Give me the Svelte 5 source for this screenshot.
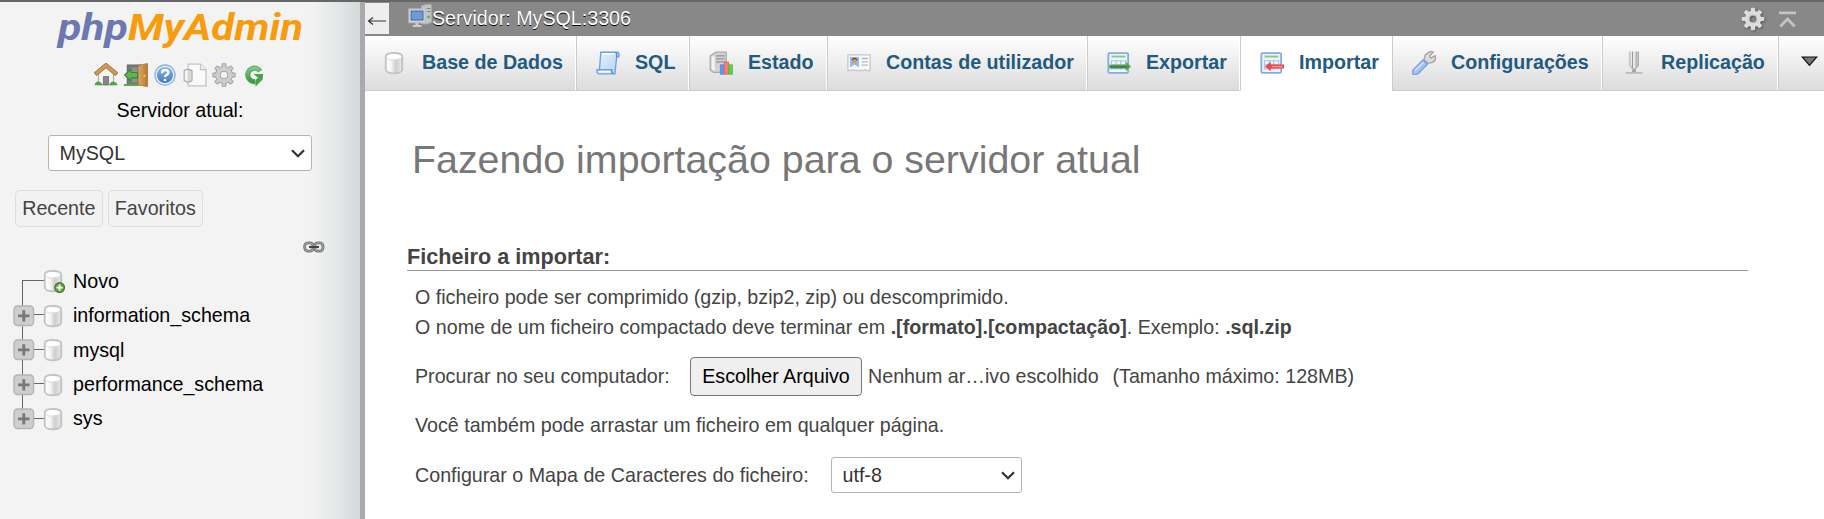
<script>
  const tabs = [
    { icon: 'db', label: 'Base de Dados' },
    { icon: 'sql', label: 'SQL' },
    { icon: 'status', label: 'Estado' },
    { icon: 'users', label: 'Contas de utilizador' },
    { icon: 'export', label: 'Exportar' },
    { icon: 'import', label: 'Importar', active: true },
    { icon: 'wrench', label: 'Configurações' },
    { icon: 'replication', label: 'Replicação' }
  ];
  const databases = ['information_schema', 'mysql', 'performance_schema', 'sys'];
  const shortcuts = ['home', 'exit', 'help', 'doc', 'gear', 'reload'];
  const teeth = [0, 45, 90, 135, 180, 225, 270, 315];
</script>

<svg class="defs" width="0" height="0" aria-hidden="true">
  <defs>
    <linearGradient id="cyl"><stop offset="0" stop-color="#fff" /><stop offset=".35" stop-color="#f4f4f4" /><stop offset=".6" stop-color="#cfcfcf" /><stop offset="1" stop-color="#e8e8e8" /></linearGradient>
    <linearGradient id="wood"><stop offset="0" stop-color="#dfa965" /><stop offset="1" stop-color="#b87731" /></linearGradient>
    <linearGradient id="blue" x2="0" y2="1"><stop offset="0" stop-color="#8db5e3" /><stop offset="1" stop-color="#4279bd" /></linearGradient>
    <linearGradient id="paper" x2="1" y2="1"><stop offset="0" stop-color="#e6f1fd" /><stop offset="1" stop-color="#b4d3f5" /></linearGradient>
    <linearGradient id="green" x2="0" y2="1"><stop offset="0" stop-color="#80c785" /><stop offset="1" stop-color="#3d9845" /></linearGradient>
  </defs>
</svg>

{#snippet cylinder()}
  <path d="M2.5 3.6C2.5.4 13.5.4 13.5 3.6V12.2C13.5 15.8 2.5 15.8 2.5 12.2Z" fill="url(#cyl)" stroke="#c2c2c2" stroke-width="1.2" />
  <ellipse cx="8" cy="3.8" rx="4.7" ry="1.8" fill="#fff" />
  <path d="M3.3 5C5 6.7 11 6.7 12.7 5" fill="none" stroke="#ddd" stroke-width=".6" />
{/snippet}

{#snippet sheet()}
  <rect x=".9" y="1.4" width="13.2" height="13.2" rx=".8" fill="#edf5fd" stroke="#87abe0" stroke-width="1.2" />
  <path d="M3 3.7H12.3" stroke="#8acb7c" stroke-width="1.3" />
  <path d="M3 6.5H12.5M3 9H12.5M3 11.8H12.5M3 6V12.5M6.1 6V12.5M9.2 6V12.5M12.4 6V12.5" stroke="#aac5e8" stroke-width=".8" />
{/snippet}

{#snippet icon(name)}
  <svg class="icon" viewBox="0 0 16 16" aria-hidden="true">
    {#if name === 'db' || name === 'new'}
      {@render cylinder()}
      {#if name === 'new'}
        <circle cx="12.4" cy="12.4" r="3.3" fill="#5d9f3c" stroke="#3f7d26" stroke-width=".7" />
        <path d="M12.4 10.3V14.5M10.3 12.4H14.5" stroke="#fff" stroke-width="1.3" />
      {/if}
    {:else if name === 'sql'}
      <path d="M3.2 .8H14.4Q15.8 1.6 15.2 3.8H13.8L12.6 15.2H1.8Q.2 14.8.7 12.5H2.3Z" fill="url(#paper)" stroke="#69a1df" stroke-width=".9" />
      <path d="M13 1Q14.4 1.8 13.7 3.8M2.3 12.5H10.6Q10 14.6 11.7 15.2" fill="none" stroke="#4c8bd0" stroke-width=".8" />
      <path d="M4 1.9H12.4M2 13.8H9.8" stroke="#fff" stroke-width="1" />
    {:else if name === 'status'}
      <path d="M.8 3.3L4.5.8H11.5V12L9 14.3H3L.8 12.7Z" fill="#d2d2d2" stroke="#aaa" stroke-width=".8" />
      <path d="M4.7 3.2H10.6M4.7 5.2H10.6M4.7 7.2H10.6" stroke="#959595" stroke-width=".9" />
      <path d="M1.8 4V12.4L3.8 13.2V3Z" fill="#f4f4f4" />
      <path d="M7.6 9.2H10V15.5H7.6Z" fill="#6798ef" stroke="#4a7de0" stroke-width=".5" />
      <path d="M10.2 7.3H13V15.5H10.2Z" fill="#f3826c" stroke="#e8604c" stroke-width=".5" />
      <path d="M13.2 9.2H15.8V15.5H13.2Z" fill="#63cf55" stroke="#45b83d" stroke-width=".5" />
    {:else if name === 'users'}
      <path d="M.6 2.6H15.4V13H12.7Q12 11.9 11 13H4.8Q4 11.9 3 13H.6Z" fill="#fafafa" stroke="#c8c8c8" stroke-width=".9" />
      <rect x="2" y="4" width="6" height="6.6" fill="#8dbbf2" />
      <circle cx="5" cy="6.5" r="1.7" fill="#d79863" />
      <path d="M3.4 6Q5 3.9 6.7 6" stroke="#67401c" stroke-width=".8" fill="none" />
      <path d="M3.2 10.6Q5 7.6 6.9 10.6Z" fill="#fff" />
      <path d="M9.7 5H14" stroke="#91bdee" stroke-width="1" />
      <path d="M9.7 7.2H14M9.7 9.4H14" stroke="#bbb" stroke-width=".9" />
    {:else if name === 'export'}
      {@render sheet()}
      <path d="M1.5 9.1H12.6V7.4L16 10.4L12.6 13.3V11.6H1.5Z" fill="#5aa14c" />
      <path d="M2 10.6H13.5" stroke="#2d7a2a" stroke-width=".8" />
    {:else if name === 'import'}
      {@render sheet()}
      <path d="M16 9H7.2V7.1L3.3 10.4L7.2 13.5V11.7H16Z" fill="#f04848" />
      <path d="M8 10.4H15" stroke="#ff9d96" stroke-width=".8" />
    {:else if name === 'wrench'}
      <path d="M8 5.6L8.9 2.5L12.3.3L14.2.8L11.7 3.4L12.6 4.8L15.5 3.2Q16.6 5.7 13.7 7.6L10.6 8.2Z" fill="#dcdcdc" stroke="#a2a2a2" stroke-width=".9" />
      <path d="M7.4 6L10.3 8.9L4.2 15Q1.7 16.4.7 15.3Q-.4 13.8 1 12.4Z" fill="#a4c3f2" stroke="#7a9fde" stroke-width=".9" />
      <path d="M2 13L7.7 7.5" stroke="#dae8fd" stroke-width=".9" />
    {:else if name === 'replication'}
      <path d="M5.2 .4V9.8" stroke="#c6c6c6" stroke-width="1.3" />
      <path d="M7 .4V11.5M10.8 .4V10" stroke="#999" stroke-width=".8" />
      <path d="M8.1 .4V12" stroke="#e8e8e8" stroke-width="1.3" />
      <path d="M9.5 .4V11.4" stroke="#b4b4b4" stroke-width="1.2" />
      <path d="M5.4 9.8L7 11.6L9 11.8L10.8 10" fill="none" stroke="#b0b0b0" stroke-width=".7" />
      <circle cx="8" cy="13.3" r="1.4" fill="#a4a4a4" />
      <path d="M2.4 14.6H13.8" stroke="#b8b8b8" stroke-width="1.1" />
    {:else if name === 'home'}
      <path d="M3 7L8 2.5L13 7V14.5H3Z" fill="#f4f4f2" stroke="#aaa" stroke-width=".7" />
      <path d="M6.3 9H9.7V14.6H6.3Z" fill="#888" stroke="#666" stroke-width=".5" />
      <path d="M.8 7.6L8 1.6L15.2 7.6" fill="none" stroke="#9f6a34" stroke-width="2.9" />
      <path d="M1.2 7.2L8 1.6L14.8 7.2" fill="none" stroke="#d39a57" stroke-width="2" />
      <path d="M.3 14.8Q1 12 3 12.3T5.8 14.8ZM10.2 14.8Q11 12 13 12.3T15.8 14.8Z" fill="#4fa641" />
    {:else if name === 'exit'}
      <path d="M2.2 1.3H11V14.5H2.2Z" fill="#777" stroke="#666" stroke-width=".7" />
      <path d="M4 3H10V13H4Z" fill="#8f8f8f" />
      <path d="M0 14.7H10" stroke="#5daa47" stroke-width="1.3" />
      <path d="M9.5 1.6L15.7.3V15.8L9.5 14.6Z" fill="url(#wood)" stroke="#a5713a" stroke-width=".5" />
      <circle cx="13.6" cy="8.5" r=".7" fill="#ffdc55" />
      <path d="M9 6.3H4.8V4L.4 8L4.8 12V9.9H9Z" fill="#65b34d" stroke="#368a35" stroke-width=".7" />
    {:else if name === 'help'}
      <circle cx="8" cy="8" r="6.7" fill="#eef5fd" stroke="#8eb1dc" stroke-width=".9" />
      <circle cx="8" cy="8" r="5.4" fill="url(#blue)" />
      <path d="M6 6.8Q6 4.7 8.1 4.7T10.2 6.4Q10.2 7.4 8.9 8Q8 8.5 8 9.3M8 10.5V12" fill="none" stroke="#fff" stroke-width="1.6" />
    {:else if name === 'doc'}
      <path d="M3.4.7H11.6L15.3 4.4V15.3H3.4Z" fill="#fafafa" stroke="#c3c3c3" stroke-width=".8" />
      <path d="M11.6.7V4.4H15.3" fill="#eee" stroke="#c3c3c3" stroke-width=".7" />
      <path d="M.8 5.2Q3.3 3.4 6 5.2V11.7Q3.3 13.7.8 11.7Z" fill="url(#cyl)" stroke="#acacac" stroke-width=".8" />
    {:else if name === 'gear'}
      <g fill="#a2a2a2">
        {#each teeth as angle}
          <rect x="6.4" y=".2" width="3.2" height="4" rx=".6" transform="rotate({angle} 8 8)" />
        {/each}
      </g>
      <circle cx="8" cy="8" r="4.1" fill="none" stroke="#9a9a9a" stroke-width="3.8" />
      <circle cx="8" cy="8" r="4.1" fill="none" stroke="#cdcdcd" stroke-width="2.8" />
      <g fill="#cdcdcd">
        {#each teeth as angle}
          <rect x="7.1" y=".8" width="1.8" height="3" transform="rotate({angle} 8 8)" />
        {/each}
      </g>
    {:else if name === 'gearlight'}
      <g fill="#dcdcdc">
        {#each teeth as angle}
          <rect x="6.6" y=".5" width="2.8" height="4" rx=".7" transform="rotate({angle} 8 8)" />
        {/each}
      </g>
      <circle cx="8" cy="8" r="4" fill="none" stroke="#dcdcdc" stroke-width="3" />
      <circle cx="8" cy="8" r="2.5" fill="none" stroke="#b5b5b5" stroke-width=".7" />
    {:else if name === 'reload'}
      <path d="M12.1 5.4A4.5 4.5 0 1 0 8.8 12.4" fill="none" stroke="#48a052" stroke-width="3.4" />
      <path d="M12 5.3A4.5 4.5 0 1 0 8.8 12.3" fill="none" stroke="url(#green)" stroke-width="2.4" />
      <path d="M7.6 7.3H14V8.8Q14 11.6 12 12.6L9 15.8V11.2L10.8 9.9Z" fill="#47a24e" />
    {:else if name === 'server'}
      <path d="M9 1.3L12 .4H15.6V12.2L12.6 13.3H9Z" fill="#c4c4c4" stroke="#aaa" stroke-width=".6" />
      <path d="M12.5 3H15M12.5 5H15" stroke="#888" stroke-width=".8" />
      <circle cx="13.7" cy="8.6" r=".9" fill="#45b847" />
      <rect x=".6" y="3.3" width="10.8" height="9.2" fill="#d4d4d4" stroke="#bdbdbd" stroke-width=".7" />
      <rect x="2.1" y="4.7" width="7.9" height="6" fill="#6f9ad6" stroke="#3763a4" stroke-width=".6" />
      <path d="M5 12.7H7V14H9V15.4H3.2V14H5Z" fill="#ccc" />
    {/if}
  </svg>
{/snippet}

{#snippet chevron()}
  <svg class="chevron" viewBox="0 0 14 9" aria-hidden="true"><path d="M1 1.2L7 7.2L13 1.2" fill="none" stroke="#333" stroke-width="2.3" /></svg>
{/snippet}

<div class="app">
  <aside>
    <svg class="logo" viewBox="0 0 250 50" role="img" aria-label="phpMyAdmin">
      <text x="2" y="33" textLength="70" lengthAdjust="spacingAndGlyphs" fill="#6c78af">php</text>
      <text x="72" y="33" textLength="175" lengthAdjust="spacingAndGlyphs" fill="#f89c0e">MyAdmin</text>
    </svg>
    <nav class="shortcuts">
      {#each shortcuts as name}{@render icon(name)}{/each}
    </nav>
    <div class="current">Servidor atual:</div>
    <div class="select server-select">
      <select aria-label="Servidor atual"><option>MySQL</option></select>
      {@render chevron()}
    </div>
    <div class="lists"><span>Recente</span><span>Favoritos</span></div>
    <div class="link">
      <svg width="22" height="12" viewBox="0 0 22 12" aria-hidden="true">
        <g fill="none"><rect x="1.7" y="1.8" width="8.6" height="8.4" rx="3.6" stroke="#707070" stroke-width="2.8" /><rect x="11.4" y="1.8" width="8.6" height="8.4" rx="3.6" stroke="#707070" stroke-width="2.8" /><rect x="1.7" y="1.8" width="8.6" height="8.4" rx="3.6" stroke="#b5b5b5" stroke-width=".9" /><rect x="11.4" y="1.8" width="8.6" height="8.4" rx="3.6" stroke="#b5b5b5" stroke-width=".9" /></g>
        <path d="M6 6H16" stroke="#444" stroke-width="2.2" />
      </svg>
    </div>
    <ul class="tree">
      <li class="first">
        <span class="node"></span>{@render icon('new')}<span>Novo</span>
      </li>
      {#each databases as name, i}
        <li class:last={i === databases.length - 1}>
          <span class="node">
            <svg class="plus" viewBox="0 0 22 22" aria-hidden="true"><rect x="1" y="1" width="19.5" height="19.5" rx="3.5" fill="#cecece" stroke="#b5b5b5" stroke-width="1.4" /><path d="M10.8 5.2V16.6M5.1 10.9H16.5" stroke="#777" stroke-width="2.8" /></svg>
          </span>{@render icon('db')}<span>{name}</span>
        </li>
      {/each}
    </ul>
  </aside>
  <div class="splitter"></div>
  <main>
    <header>
      <button class="back" aria-label="Voltar">
        <svg width="20" height="10" viewBox="0 0 20 10" aria-hidden="true"><path d="M19 5H2M6 1.5L1.5 5L6 8.5" fill="none" stroke="#333" stroke-width="1.2" /></svg>
      </button>
      <div class="crumb">{@render icon('server')}<span>Servidor: MySQL:3306</span></div>
      <div class="tools">
        {@render icon('gearlight')}
        <svg width="18" height="17" viewBox="0 0 18 17" aria-hidden="true"><path d="M0 1.9H17M1.3 15.5L8.5 8L15.7 15.5" fill="none" stroke="#c4c4c4" stroke-width="2.6" /></svg>
      </div>
    </header>
    <nav class="tabs">
      {#each tabs as tab}
        <a class:active={tab.active}>{@render icon(tab.icon)}<span>{tab.label}</span></a>
      {/each}
      <a class="more"><svg width="17" height="11" viewBox="0 0 17 11" aria-hidden="true"><path d="M1.3 1H15.7L8.5 9.3Z" fill="#777" stroke="#111" stroke-width="1.2" /></svg></a>
    </nav>
    <section>
      <h2>Fazendo importação para o servidor atual</h2>
      <h3>Ficheiro a importar:</h3>
      <form>
        <p>O ficheiro pode ser comprimido (gzip, bzip2, zip) ou descomprimido.<br />O nome de um ficheiro compactado deve terminar em <b>.[formato].[compactação]</b>. Exemplo: <b>.sql.zip</b></p>
        <div class="browse">
          <span>Procurar no seu computador:</span>
          <button type="button">Escolher Arquivo</button>
          <span class="chosen">Nenhum ar…ivo escolhido</span>
          <span>(Tamanho máximo: 128MB)</span>
        </div>
        <p class="drag">Você também pode arrastar um ficheiro em qualquer página.</p>
        <div class="charset">
          <span>Configurar o Mapa de Caracteres do ficheiro:</span>
          <div class="select">
            <select aria-label="Mapa de Caracteres"><option>utf-8</option></select>
            {@render chevron()}
          </div>
        </div>
      </form>
    </section>
  </main>
</div>

<style>
  :global(body) { margin: 0; overflow: hidden; background: #fff; }
  .defs { position: absolute; }
  .app {
    display: grid;
    grid-template-columns: 360px 5px 1fr;
    box-sizing: border-box;
    width: 100vw;
    height: 519px;
    border-top: 2px solid #666;
    overflow: hidden;
    font: 19.68px "Liberation Sans", Arial, sans-serif;
    color: #444;
    white-space: nowrap;
  }
  .icon { display: block; flex: none; width: 24px; height: 24px; }
  aside {
    min-width: 0;
    background: linear-gradient(to right, #f3f3f3 308px, #eaecec 328px, #dfe3e4 344px, #d3d8da 360px);
    color: #000;
  }
  .splitter { background: #aaa; }
  .logo { display: block; width: 250px; height: 50px; margin: 5px 0 0 56px; overflow: visible; }
  .logo text { font: italic 700 37.5px Roboto, sans-serif; }
  .shortcuts { display: flex; gap: 5.5px; margin: 6px 0 0 94px; }
  .current { margin-top: 8px; height: 30px; line-height: 30px; text-align: center; }
  .select { position: relative; box-sizing: border-box; height: 36px; }
  select {
    appearance: none;
    box-sizing: border-box;
    display: block;
    width: 100%;
    height: 100%;
    margin: 0;
    padding: 0 0 0 10.5px;
    border: 1px solid #b5b5b5;
    border-radius: 3px;
    background: #fff;
    color: #333;
    font: inherit;
  }
  .chevron { position: absolute; right: 7px; top: 14px; width: 14px; height: 9px; }
  .server-select { width: 264px; margin: 10px 0 0 48px; }
  .lists { display: flex; gap: 5px; margin: 19px 0 0 15px; }
  .lists span {
    box-sizing: border-box;
    height: 37px;
    padding: 0 6.2px;
    border: 1px solid #ddd;
    border-radius: 5px;
    background: #f2f2f2;
    color: #444;
    line-height: 34px;
  }
  .link { height: 12px; margin: 14px 0 0 303px; }
  .link svg { display: block; }
  .tree { list-style: none; margin: 11px 0 0 13px; padding: 0; }
  .tree li { display: flex; align-items: center; height: 34.45px; }
  .tree li > span:last-child { margin-left: 8px; }
  .node {
    display: flex;
    align-items: center;
    width: 31px;
    height: 100%;
    margin-right: -3px;
    background:
      linear-gradient(#666, #666) 9px 0 / 1px 100% no-repeat,
      linear-gradient(#666, #666) 9px 16px / 22px 1px no-repeat;
  }
  .first .node {
    background:
      linear-gradient(#666, #666) 9px 17px / 1px 100% no-repeat,
      linear-gradient(#666, #666) 9px 16px / 22px 1px no-repeat;
  }
  .last .node {
    background:
      linear-gradient(#666, #666) 9px 0 / 1px 50% no-repeat,
      linear-gradient(#666, #666) 9px 16px / 22px 1px no-repeat;
  }
  .plus { width: 22px; height: 22px; }
  main { min-width: 0; }
  header { display: flex; height: 34px; background: #888; }
  .back {
    display: flex;
    align-items: center;
    justify-content: center;
    width: 24px;
    height: 31px;
    margin: 1px 0 0;
    padding: 5px 0 0;
    border: 0;
    background: #eee;
  }
  .crumb { display: flex; margin-left: 19px; padding-top: 2px; color: #fff; text-shadow: 0 1px 0 #000; }
  .crumb span { line-height: 30px; margin-top: -1px; }
  .tools { display: flex; align-items: center; gap: 14px; margin: 0 27px 0 auto; }
  .tools .icon { filter: drop-shadow(1px 1px 1px #555); }
  .tabs { display: grid; grid-template-columns: 211px 113px 138px 260px 153px 152px 210px 176px 46px; height: 55px; }
  .tabs a {
    display: flex;
    align-items: center;
    box-sizing: border-box;
    padding: 0 0 0 19px;
    border-left: 1px solid #ccc;
    border-bottom: 1px solid #ccc;
    background: linear-gradient(#fff, #dcdcdc);
    box-shadow: inset -1px 0 #fff;
    color: #235a81;
    font-weight: 700;
  }
  .tabs a:first-child { padding-left: 17px; border-left: 0; }
  .tabs a:first-child span { margin-left: 16px; }
  .tabs a span { margin: -1px 0 0 15px; }
  .tabs .icon { margin-top: -1px; }
  .tabs .active { background: #fff; border-bottom-color: #fff; }
  .tabs .more { padding-left: 22px; padding-bottom: 3px; box-shadow: none; }
  section { padding: 44px 76px 0 42px; }
  h2 { margin: 0 0 0 5px; height: 48px; line-height: 48px; font-size: 39.36px; font-weight: 400; color: #777; }
  h3 { box-sizing: border-box; height: 28px; margin: 60px 0 0; line-height: 27px; border-bottom: 1px solid #999; font-size: 21.65px; }
  form { padding-left: 8px; }
  p { margin: 11px 0 0; line-height: 30px; }
  .browse { display: flex; align-items: center; height: 39px; margin-top: 15px; }
  .browse > span:first-child { width: 275px; }
  .browse button {
    box-sizing: border-box;
    width: 172px;
    height: 39px;
    padding: 0;
    border: 1px solid #767676;
    border-radius: 4px;
    background: #efefef;
    color: #000;
    font: inherit;
  }
  .chosen { width: 244.5px; margin-left: 6px; }
  .drag { margin-top: 14px; }
  .charset { display: flex; align-items: center; margin-top: 17px; }
  .charset > span { width: 416px; }
  .charset .select { width: 191px; }
</style>
